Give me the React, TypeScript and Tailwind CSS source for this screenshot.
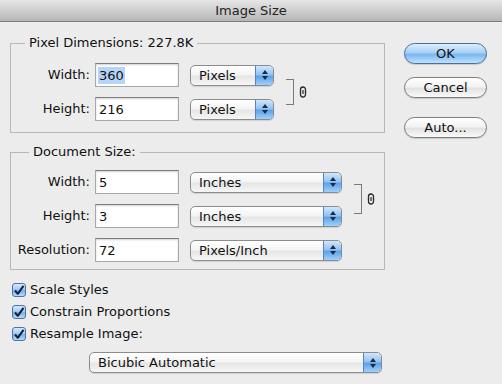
import React from 'react';

const Stepper = () => (
  <div className="ml-auto h-full w-[18px] rounded-r-[4px] border-l border-[#5b82bb] bg-[linear-gradient(to_bottom,#d2e6fb_0%,#92c3f2_45%,#5ea2ea_55%,#9fd0fb_100%)] flex flex-col items-center justify-center gap-[2px]">
    <svg width="6" height="4" viewBox="0 0 6 4">
      <path d="M3 0 L6 4 L0 4 Z" fill="#1b2a45" />
    </svg>
    <svg width="6" height="4" viewBox="0 0 6 4">
      <path d="M0 0 L6 0 L3 4 Z" fill="#1b2a45" />
    </svg>
  </div>
);

const Select = ({ label, className }: { label: string; className: string }) => (
  <div
    className={`flex items-center h-[21px] rounded-[5px] border border-[#8c8c8c] bg-[linear-gradient(to_bottom,#ffffff_0%,#f4f4f4_45%,#e6e6e6_55%,#f6f6f6_100%)] shadow-[0_1px_1px_rgba(0,0,0,0.12)] overflow-hidden ${className}`}
  >
    <span className="pl-[8px] leading-[19px] text-[#111]">{label}</span>
    <Stepper />
  </div>
);

const Field = ({ value, selected }: { value: string; selected?: boolean }) => (
  <div className="w-[84px] h-[24px] bg-white border border-[#a8a8a8] border-t-[#7d7d7d] shadow-[inset_0_1px_2px_rgba(0,0,0,0.18)] flex items-center pl-[2px]">
    <span className={`px-[1px] leading-[17px] text-[#111] ${selected ? 'bg-[#b6d4f7]' : ''}`}>{value}</span>
  </div>
);

const Row = ({ label, value, unit, selectWidth, selected }: { label: string; value: string; unit: string; selectWidth: string; selected?: boolean }) => (
  <div className="flex items-center h-[24px]">
    <span className="w-[79px] text-right text-[#111]">{label}</span>
    <div className="ml-[5px]">
      <Field value={value} selected={selected} />
    </div>
    <Select label={unit} className={`ml-[11px] ${selectWidth}`} />
  </div>
);

const Chain = () => (
  <svg width="8" height="12" viewBox="0 0 8 12" className="ml-[5px]">
    <path d="M1.5 6.5 V3.5 a2.5 2.5 0 0 1 5 0 V6.5" fill="none" stroke="#2a2a2a" strokeWidth="1.3" />
    <path d="M1.5 5.5 V8.5 a2.5 2.5 0 0 0 5 0 V5.5" fill="none" stroke="#2a2a2a" strokeWidth="1.3" />
    <path d="M4 4 V8" stroke="#2a2a2a" strokeWidth="1.2" />
  </svg>
);

const Bracket = ({ h }: { h: string }) => (
  <div className={`ml-[12px] w-[8px] ${h} border-t border-r border-b border-[#7a7a7a]`} />
);

const Check = ({ label }: { label: string }) => (
  <div className="flex items-center h-[22px] ml-[2px]">
    <div className="w-[14px] h-[14px] rounded-[3px] border border-[#4f74a4] bg-[linear-gradient(to_bottom,#d6e8fb_0%,#9cc9f3_50%,#74b0ee_55%,#b5dbfb_100%)] flex items-center justify-center">
      <svg width="12" height="11" viewBox="0 0 12 11">
        <path d="M2 5.5 L4.8 8.8 L10.5 0.8" fill="none" stroke="#142036" strokeWidth="2" strokeLinejoin="round" />
      </svg>
    </div>
    <span className="ml-[4px] text-[#111]">{label}</span>
  </div>
);

const Button = ({ label, primary }: { label: string; primary?: boolean }) => (
  <div
    className={`w-[83px] h-[21px] rounded-full border flex items-center justify-center leading-[19px] text-[#111] shadow-[0_1px_1px_rgba(0,0,0,0.15)] ${
      primary
        ? 'border-[#4a6f9f] bg-[linear-gradient(to_bottom,#dcedfd_0%,#a9d1f6_45%,#79b7f1_55%,#bfe2fd_100%)]'
        : 'border-[#7c7c7c] bg-[linear-gradient(to_bottom,#ffffff_0%,#f3f3f3_45%,#e2e2e2_55%,#f9f9f9_100%)]'
    }`}
  >
    {label}
  </div>
);

export default function App() {
  return (
    <div className="w-[502px] h-[384px] bg-[#ececec] flex flex-col overflow-hidden font-['DejaVu_Sans',sans-serif] text-[13px]">
      <div className="h-[22px] shrink-0 border-b border-[#7d7d7d] bg-[linear-gradient(to_bottom,#e6e6e6_0%,#cfcfcf_50%,#b6b6b6_100%)] flex items-center justify-center text-[#222]">
        Image Size
      </div>

      <div className="flex pl-[10px]">
        <div className="w-[375px] flex flex-col">
          <fieldset className="mt-[13px] border border-[#b7b7b7] pt-[12px] pb-[11px]">
            <legend className="ml-[14px] px-[4px] leading-[16px] text-[#111]">Pixel Dimensions: 227.8K</legend>
            <div className="flex items-center">
              <div className="flex flex-col gap-[10px]">
                <Row label="Width:" value="360" unit="Pixels" selectWidth="w-[84px]" selected />
                <Row label="Height:" value="216" unit="Pixels" selectWidth="w-[84px]" />
              </div>
              <Bracket h="h-[26px]" />
              <Chain />
            </div>
          </fieldset>

          <fieldset className="mt-[11px] border border-[#b7b7b7] pt-[10px] pb-[7px]">
            <legend className="ml-[18px] px-[4px] leading-[16px] text-[#111]">Document Size:</legend>
            <div className="flex flex-col gap-[10px]">
              <div className="flex items-center">
                <div className="flex flex-col gap-[10px]">
                  <Row label="Width:" value="5" unit="Inches" selectWidth="w-[152px]" />
                  <Row label="Height:" value="3" unit="Inches" selectWidth="w-[152px]" />
                </div>
                <Bracket h="h-[30px]" />
                <Chain />
              </div>
              <Row label="Resolution:" value="72" unit="Pixels/Inch" selectWidth="w-[152px]" />
            </div>
          </fieldset>

          <div className="mt-[9px] flex flex-col">
            <Check label="Scale Styles" />
            <Check label="Constrain Proportions" />
            <Check label="Resample Image:" />
          </div>

          <Select label="Bicubic Automatic" className="mt-[7px] ml-[79px] w-[293px]" />
        </div>

        <div className="ml-[19px] mt-[21px] flex flex-col">
          <Button label="OK" primary />
          <div className="mt-[13px]">
            <Button label="Cancel" />
          </div>
          <div className="mt-[19px]">
            <Button label="Auto..." />
          </div>
        </div>
      </div>
    </div>
  );
}
